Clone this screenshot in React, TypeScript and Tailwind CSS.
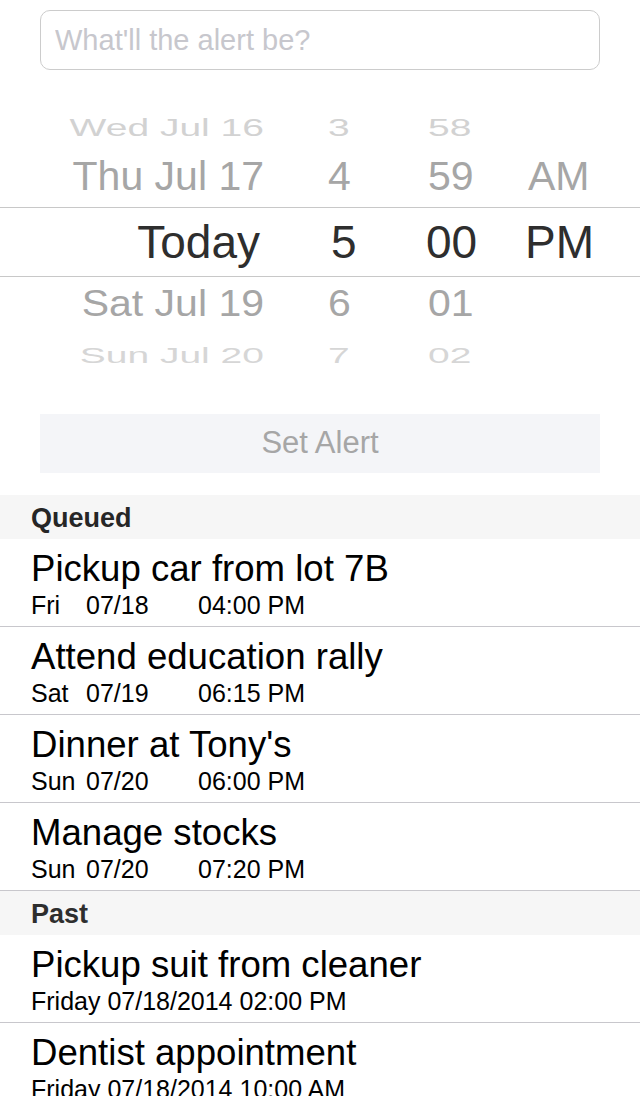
import React from 'react'

type PickerRow = {
  date: string
  hour: string
  minute: string
  ampm: string
  rowClass: string
  textClass: string
  dateW: string
  hourW: string
  minuteW: string
}

const pickerRows: PickerRow[] = [
  { date: 'Wed Jul 16', hour: '3', minute: '58', ampm: '', rowClass: 'h-[26px]', textClass: 'text-[39px] text-[#d2d2d2] scale-y-[0.6]', dateW: 'w-[264px]', hourW: 'ml-[64px] w-[100px]', minuteW: 'w-[100px]' },
  { date: 'Thu Jul 17', hour: '4', minute: '59', ampm: 'AM', rowClass: 'h-[67px] pt-[5px]', textClass: 'text-[41px] text-[#a6a6a6]', dateW: 'w-[264px]', hourW: 'ml-[64px] w-[100px]', minuteW: 'w-[100px]' },
  { date: 'Today', hour: '5', minute: '00', ampm: 'PM', rowClass: 'h-[70px] border-y border-[#c8c8c8]', textClass: 'text-[46px] text-[#2e2e2e]', dateW: 'w-[260px]', hourW: 'ml-[71px] w-[95px]', minuteW: 'w-[99px]' },
  { date: 'Sat Jul 19', hour: '6', minute: '01', ampm: '', rowClass: 'h-[55px]', textClass: 'text-[41px] text-[#a6a6a6] scale-y-[0.88]', dateW: 'w-[264px]', hourW: 'ml-[64px] w-[100px]', minuteW: 'w-[100px]' },
  { date: 'Sun Jul 20', hour: '7', minute: '02', ampm: '', rowClass: 'h-[46px]', textClass: 'text-[39px] text-[#d6d6d6] scale-y-[0.58]', dateW: 'w-[264px]', hourW: 'ml-[64px] w-[100px]', minuteW: 'w-[100px]' },
]

const queued = [
  { title: 'Pickup car from lot 7B', day: 'Fri', date: '07/18', time: '04:00 PM' },
  { title: 'Attend education rally', day: 'Sat', date: '07/19', time: '06:15 PM' },
  { title: "Dinner at Tony's", day: 'Sun', date: '07/20', time: '06:00 PM' },
  { title: 'Manage stocks', day: 'Sun', date: '07/20', time: '07:20 PM' },
]

const past = [
  { title: 'Pickup suit from cleaner', when: 'Friday 07/18/2014 02:00 PM' },
  { title: 'Dentist appointment', when: 'Friday 07/18/2014 10:00 AM' },
]

export default function App() {
  return (
    <div className="w-[640px] h-[1096px] overflow-hidden bg-white font-['Liberation_Sans',Arial,sans-serif]">
      {/* Alert text input */}
      <div className="px-[40px] pt-[10px]">
        <input
          placeholder="What'll the alert be?"
          className="w-full h-[60px] rounded-[10px] border border-[#cccccc] pl-[14px] text-[29px] text-[#222] placeholder:text-[#c7c7cd] outline-none"
        />
      </div>

      {/* Date picker wheel */}
      <div className="mt-[44px] h-[271px] overflow-hidden">
        <div className="flex flex-col">
          {pickerRows.map((r) => (
            <div key={r.date} className={`flex items-center ${r.rowClass}`}>
              <div className={`${r.dateW} text-right leading-none ${r.textClass}`}>{r.date}</div>
              <div className={`${r.hourW} leading-none ${r.textClass}`}>{r.hour}</div>
              <div className={`${r.minuteW} leading-none ${r.textClass}`}>{r.minute}</div>
              <div className={`leading-none ${r.textClass}`}>{r.ampm}</div>
            </div>
          ))}
        </div>
      </div>

      {/* Set alert button */}
      <div className="px-[40px] mt-[29px]">
        <button className="w-full h-[59px] bg-[#f4f5f8] text-[31px] text-[#a6a6a6] flex items-center justify-center">
          Set Alert
        </button>
      </div>

      {/* Queued */}
      <div className="mt-[22px] h-[44px] bg-[#f6f6f6] flex items-center pl-[31px] pt-[3px] text-[27px] font-bold text-[#262626]">
        Queued
      </div>
      {queued.map((q, i) => (
        <div key={q.title} className={i === queued.length - 1 ? 'border-b border-[#c8c7cc]' : ''}>
          <div className={`pl-[31px] pt-[10px] pb-[7px] ${i === queued.length - 1 ? '' : 'border-b border-[#c8c7cc]'}`}>
            <div className="h-[40px] flex items-center text-[36.6px] leading-none text-black">{q.title}</div>
            <div className="mt-[2px] h-[28px] flex items-center text-[25px] leading-none text-black">
              <span className="w-[55px]">{q.day}</span>
              <span className="w-[112px]">{q.date}</span>
              <span>{q.time}</span>
            </div>
          </div>
        </div>
      ))}

      {/* Past */}
      <div className="h-[44px] bg-[#f6f6f6] flex items-center pl-[31px] pt-[2px] text-[27px] font-bold text-[#2e2e2e]">
        Past
      </div>
      {past.map((p) => (
        <div key={p.title} className="pl-[31px] pt-[10px] pb-[7px] border-b border-[#c8c7cc]">
          <div className="h-[40px] flex items-center text-[36.6px] leading-none text-black">{p.title}</div>
          <div className="mt-[2px] h-[28px] flex items-center text-[25px] leading-none text-black">{p.when}</div>
        </div>
      ))}
    </div>
  )
}
